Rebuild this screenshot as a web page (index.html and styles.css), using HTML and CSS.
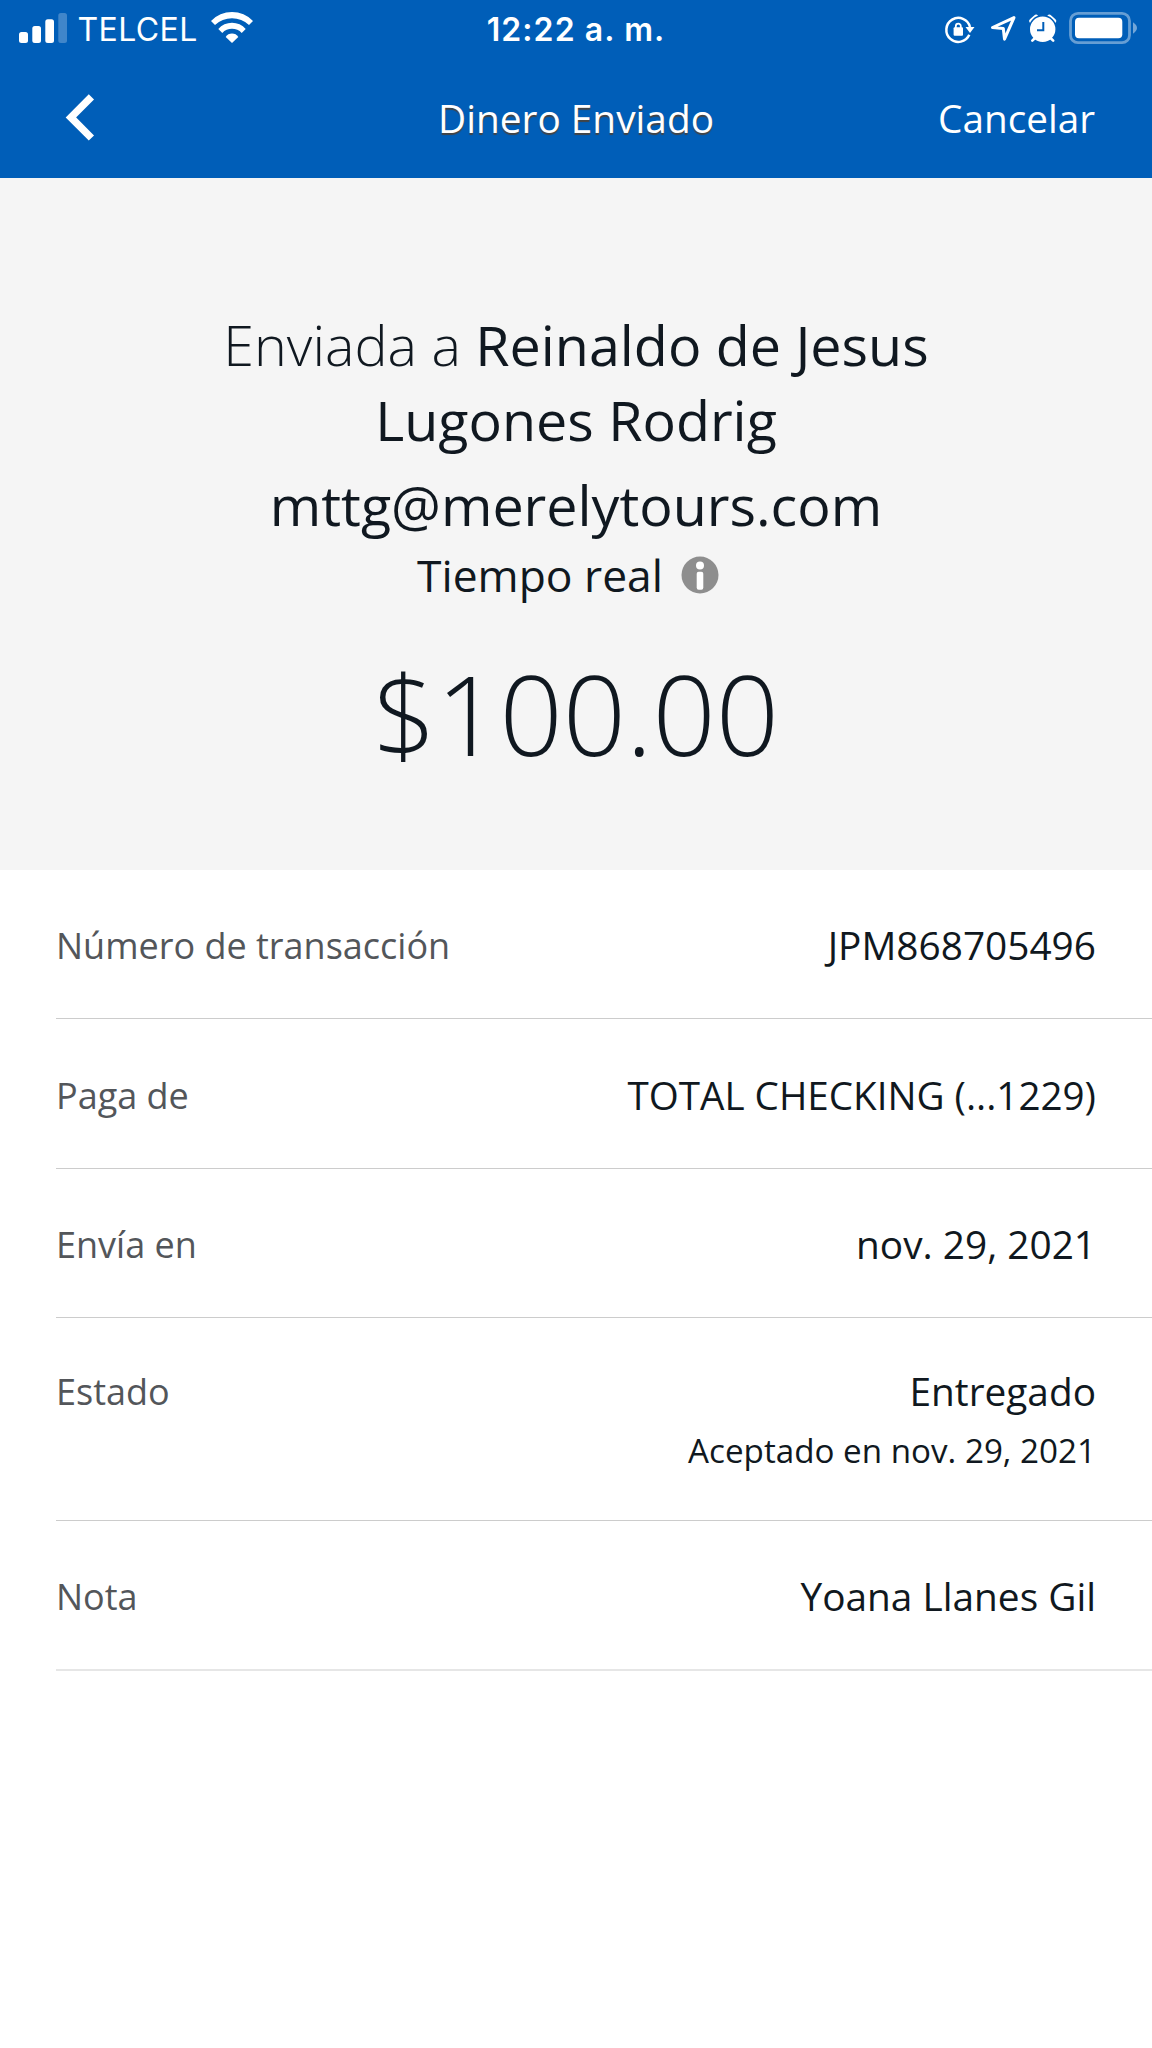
FILE: index.html
```html
<!DOCTYPE html>
<html lang="es">
<head>
<meta charset="utf-8">
<title>Dinero Enviado</title>
<link rel="stylesheet" href="styles.css">
</head>
<body>
<header class="top">
  <div class="status">
    <div class="status-left">
      <svg class="signal" width="48" height="30" viewBox="0 0 48 30" fill="#fff"><rect x="0" y="19" width="9" height="11" rx="2.500"/><rect x="13.300" y="13" width="8.700" height="17" rx="2.500"/><rect x="26.300" y="6.300" width="8.700" height="23.700" rx="2.500"/><rect x="39.300" y="0" width="8.700" height="30" rx="2.500" opacity=".25"/></svg>
      <span class="carrier">TELCEL</span>
      <svg class="wifi" width="42" height="31" viewBox="0 0 42 31" fill="#fff"><path d="M0 9A29 29 0 0 1 42 9L38 13A25 25 0 0 0 4 13Z"/><path d="M7.300 17A18 18 0 0 1 34.700 17L30.700 21A13 13 0 0 0 11.300 21Z"/><path d="M14.700 25A7.300 7.300 0 0 1 27.300 25L21 31Z"/></svg>
    </div>
    <span class="clock">12:22 a. m.</span>
    <div class="status-right">
      <svg width="194" height="34" viewBox="944 12 194 34" fill="none" stroke="#fff">
        <g stroke-width="2.500"><path d="M969.300 34.800A12 12 0 1 1 970 27"/><path d="M965.500 27h9L970 33Z" fill="#fff" stroke="none"/><rect x="953.600" y="27.300" width="9.400" height="8.500" rx="1" fill="#fff" stroke="none"/><path d="M955.800 28v-1.800a2.500 2.500 0 0 1 5 0V28" stroke-width="1.800"/></g>
        <path d="M1014 17.600L992.500 27.500L1003.300 28.500L1004.500 39.200Z" stroke-width="3" stroke-linejoin="round"/>
        <path d="M1032 21l4-3.500M1053.400 21l-4-3.500" stroke-width="5.500" stroke-linecap="round"/>
        <circle cx="1042.700" cy="29.300" r="13.500" fill="#fff" stroke="#005eb8" stroke-width="1.600"/>
        <path d="M1043.300 22v8.200H1037" stroke="#005eb8" stroke-width="2"/>
        <path d="M1034.500 38.500l-2.200 2.200M1051 38.500l2.200 2.200" stroke-width="2.600" stroke-linecap="round"/>
        <rect x="1070.500" y="13.400" width="59" height="29.300" rx="7.500" stroke-width="2.800" opacity=".4"/>
        <rect x="1075" y="17.700" width="47.300" height="20.500" rx="4" fill="#fff" stroke="none"/>
        <path d="M1133 22.300q8 5.700 0 11.400Z" fill="#fff" opacity=".45" stroke="none"/>
      </svg>
    </div>
  </div>
  <nav class="nav">
    <svg class="back" width="36" height="48" viewBox="0 0 36 48" fill="none" stroke="#fff" stroke-width="7.400"><path d="M29.400 2.800L8.900 23.400L29.400 44"/></svg>
    <h1>Dinero Enviado</h1>
    <span class="cancel">Cancelar</span>
  </nav>
</header>
<section class="summary">
  <p class="name"><span class="light">Enviada a</span> Reinaldo de Jesus<br>Lugones Rodrig</p>
  <p class="email">mttg@merelytours.com</p>
  <p class="speed"><span>Tiempo real</span><svg width="38" height="38" viewBox="0 0 38 38"><circle cx="19" cy="19" r="18.500" fill="#8e8e8e"/><circle cx="19" cy="9.500" r="4" fill="#fff"/><rect x="15.700" y="15.800" width="6.600" height="18" rx="2" fill="#fff"/></svg></p>
  <p class="amount">$100.00</p>
</section>
<dl class="details">
  <div class="row"><dt>Número de transacción</dt><dd>JPM868705496</dd></div>
  <div class="row even"><dt>Paga de</dt><dd class="account">TOTAL CHECKING (...1229)</dd></div>
  <div class="row"><dt>Envía en</dt><dd>nov. 29, 2021</dd></div>
  <div class="row tall"><dt>Estado</dt><dd>Entregado<small>Aceptado en nov. 29, 2021</small></dd></div>
  <div class="row last"><dt>Nota</dt><dd>Yoana Llanes Gil</dd></div>
</dl>
</body>
</html>
```
FILE: styles.css
```css
*{box-sizing:border-box}
body{margin:0;background:#fff;color:#101820;font-family:"Open Sans",sans-serif}
p,h1,dl,dd{margin:0}
svg{display:block;flex:none}

.top{height:178px;background:#005eb8;color:#fff}
.status{display:grid;grid-template-columns:1fr auto 1fr;height:58px;align-items:center;padding:0 14px;font-family:Inter,sans-serif}
.status-left{display:flex;align-items:center}
.signal{margin:-2px 0 0 4.5px}
.carrier{font-size:32px;font-weight:400;letter-spacing:.4px;margin-left:11px}
.wifi{margin:-3px 0 0 13px}
.clock{font-size:32px;font-weight:600;letter-spacing:1.1px}
.status-right{display:flex;justify-content:flex-end}

.nav{display:grid;grid-template-columns:1fr auto 1fr;height:120px;align-items:center;padding:0 57px}
.back{margin-left:5px}
.nav h1{font-size:38.8px;font-weight:400;text-shadow:0 2px 1px #444}
.cancel{text-align:right;font-size:38.7px}

.summary{height:692px;background:#f5f5f5;padding-top:129px;text-align:center}
.name,.email{font-size:55.6px;line-height:75px}
.light{font-weight:300}
.email{margin-top:10px}
.speed{font-size:44.4px;line-height:60px;display:flex;justify-content:center;align-items:center;gap:17.5px;margin-top:3px;padding-right:16.5px}
.amount{font-size:110.9px;line-height:150px;font-weight:300;margin-top:33px}

.details{padding-left:56px}
.row{display:flex;justify-content:space-between;height:149px;border-bottom:1px solid #ccc;padding:50px 56px 0 0;line-height:52px}
.row dt{color:#53565a;font-size:36px}
.row dd{margin-top:-1px;text-align:right;white-space:nowrap;font-size:38.8px}
.row .account{font-size:38.6px}
.row.even{height:150px;padding-top:51px}
.row.tall{height:203px;padding-top:48px}
.row.last{height:150px;padding-top:50px;border-bottom:2px solid #e6e6e6}
.row small{display:block;font-size:33.2px;margin-top:8px}
```
